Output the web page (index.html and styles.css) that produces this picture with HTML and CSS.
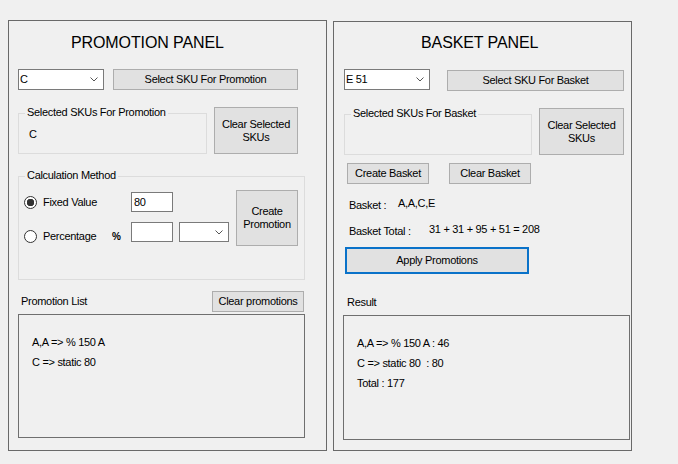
FILE: index.html
```html
<!DOCTYPE html>
<html>
<head>
<meta charset="utf-8">
<link rel="stylesheet" href="styles.css">
</head>
<body>
<div class="app">
  <section class="panel panel-promo">
    <h1 class="panel-title">PROMOTION PANEL</h1>
    <div class="row row-select">
      <div class="combo"><span>C</span><svg class="chev" width="8" height="5" viewBox="0 0 8 5"><path d="M0.5 0.5 L4 4 L7.5 0.5" fill="none" stroke="#555" stroke-width="1"/></svg></div>
      <button class="btn btn-select-promo">Select SKU For Promotion</button>
    </div>
    <div class="row row-selected">
      <div class="group group-selected-promo">
        <div class="group-title">Selected SKUs For Promotion</div>
        <div class="group-text">C</div>
      </div>
      <button class="btn btn-clear-sel btn-clear-promo">Clear Selected<br>SKUs</button>
    </div>
    <div class="group group-calc">
      <div class="group-title">Calculation Method</div>
      <div class="calc-body">
        <div class="calc-grid">
          <label class="radio-label"><span class="radio checked"></span>Fixed Value</label>
          <span></span>
          <div class="textbox">80</div>
          <span></span>
          <label class="radio-label radio-label-low"><span class="radio"></span>Percentage</label>
          <span class="pct">%</span>
          <div class="textbox"></div>
          <div class="combo combo-small"><span></span><svg class="chev" width="8" height="5" viewBox="0 0 8 5"><path d="M0.5 0.5 L4 4 L7.5 0.5" fill="none" stroke="#555" stroke-width="1"/></svg></div>
        </div>
        <button class="btn btn-create">Create<br>Promotion</button>
      </div>
    </div>
    <div class="row row-list-head">
      <span class="list-label">Promotion List</span>
      <button class="btn btn-clear-promos">Clear promotions</button>
    </div>
    <div class="listbox listbox-promo">
      <div>A,A =&gt; % 150 A</div>
      <div>C =&gt; static 80</div>
    </div>
  </section>

  <section class="panel panel-basket">
    <h1 class="panel-title">BASKET PANEL</h1>
    <div class="row row-select">
      <div class="combo"><span>E 51</span><svg class="chev" width="8" height="5" viewBox="0 0 8 5"><path d="M0.5 0.5 L4 4 L7.5 0.5" fill="none" stroke="#555" stroke-width="1"/></svg></div>
      <button class="btn btn-select-basket">Select SKU For Basket</button>
    </div>
    <div class="row row-selected">
      <div class="group group-selected-basket">
        <div class="group-title">Selected SKUs For Basket</div>
      </div>
      <button class="btn btn-clear-sel btn-clear-basket">Clear Selected<br>SKUs</button>
    </div>
    <div class="row row-basket-btns">
      <button class="btn btn-basket">Create Basket</button>
      <button class="btn btn-basket">Clear Basket</button>
    </div>
    <div class="info-row info-basket">
      <span class="info-label">Basket :</span>
      <span class="info-value">A,A,C,E</span>
    </div>
    <div class="info-row info-total">
      <span class="info-label">Basket Total :</span>
      <span class="info-value">31 + 31 + 95 + 51 = 208</span>
    </div>
    <button class="btn btn-apply">Apply Promotions</button>
    <span class="result-label">Result</span>
    <div class="listbox listbox-result">
      <div>A,A =&gt; % 150 A : 46</div>
      <div>C =&gt; static 80&nbsp; : 80</div>
      <div>Total : 177</div>
    </div>
  </section>
</div>
</body>
</html>
```

FILE: styles.css
```css
* { box-sizing: border-box; }

body {
  margin: 0;
  width: 678px;
  height: 464px;
  overflow: hidden;
  background: #f0f0f0;
  color: #000;
  font-family: "Liberation Sans", Arial, sans-serif;
  font-size: 11px;
  line-height: 13px;
  letter-spacing: -0.3px;
}

.app {
  display: flex;
  align-items: flex-start;
  gap: 6px;
  padding: 20px 0 0 8px;
}

.panel {
  border: 1px solid #696969;
  display: flex;
  flex-direction: column;
  align-items: flex-start;
}

.panel-promo { width: 319px; height: 431px; padding: 13px 0 0 9px; }
.panel-basket { width: 299px; height: 430px; margin-top: 1px; padding: 12px 0 0 10px; }

.panel-title {
  margin: 0;
  font-size: 16px;
  line-height: 18px;
  font-weight: normal;
  letter-spacing: -0.1px;
}
.panel-promo .panel-title { margin-left: 53px; }
.panel-basket .panel-title { margin-left: 77px; }

.row { display: flex; align-items: flex-start; }
.row-select { margin-top: 17px; }
.row-selected { margin-top: 17px; }

.combo {
  width: 86px;
  height: 21px;
  background: #fff;
  border: 1px solid #7a7a7a;
  display: flex;
  align-items: center;
  justify-content: space-between;
  padding: 0 5px 0 1px;
}
.combo-small { width: 50px; height: 20px; }
.chev { display: block; }

.btn {
  font: inherit;
  letter-spacing: inherit;
  color: #000;
  background: #e1e1e1;
  border: 1px solid #adadad;
  padding: 0;
  margin: 0;
  text-align: center;
  line-height: 13px;
}

.btn-select-promo { width: 185px; height: 21px; margin-left: 9px; }
.btn-select-basket { width: 177px; height: 21px; margin-left: 17px; margin-top: 1px; }

.group { border: 1px solid #dcdcdc; }
.group-title {
  width: fit-content;
  margin: -8px 0 0 6px;
  padding: 0 2px;
  background: #f0f0f0;
}
.group-text { margin: 9px 0 0 10px; }

.group-selected-promo { width: 189px; height: 41px; margin-top: 6px; }
.group-selected-basket { width: 188px; height: 41px; margin-top: 6px; }

.btn-clear-sel { height: 47px; margin-left: 7px; }
.btn-clear-promo { width: 84px; }
.btn-clear-basket { width: 85px; }

.group-calc { width: 287px; height: 104px; margin-top: 22px; }
.calc-body {
  display: flex;
  align-items: flex-start;
  margin-top: 8px;
  padding-left: 5px;
}
.calc-grid {
  display: grid;
  grid-template-columns: 82px 13px 42px 50px;
  grid-template-rows: 20px 20px;
  column-gap: 6px;
  row-gap: 10px;
  margin-top: 2px;
}
.radio-label { display: flex; align-items: center; gap: 6px; }
.radio-label-low { align-self: start; margin-top: 8px; }
.radio {
  width: 13px;
  height: 13px;
  border: 1px solid #333;
  border-radius: 50%;
  background: #fff;
  flex: none;
}
.radio.checked { background: radial-gradient(circle, #333 0 3.5px, #fff 4px); }
.pct {
  align-self: start;
  margin-top: 9px;
  font-weight: bold;
  font-size: 10px;
  line-height: 12px;
}
.textbox {
  background: #fff;
  border: 1px solid #7a7a7a;
  padding-left: 2px;
  line-height: 18px;
}
.btn-create { width: 62px; height: 56px; margin-left: 7px; }

.row-list-head {
  width: 287px;
  margin-top: 11px;
  justify-content: space-between;
  align-items: center;
}
.list-label { margin-left: 3px; }
.btn-clear-promos { width: 92px; height: 21px; margin-right: 1px; }

.listbox {
  width: 287px;
  border: 1px solid #6f6f6f;
  padding: 17px 0 0 13px;
  line-height: 20px;
}
.listbox-promo { height: 124px; margin-top: 2px; }
.listbox-result { height: 125px; margin-top: 6px; margin-left: -1px; }

.row-basket-btns { margin-top: 8px; margin-left: 3px; gap: 20px; }
.btn-basket { width: 82px; height: 21px; }

.info-row { display: flex; margin-left: 5px; }
.info-label { margin-top: 2px; }
.info-basket { margin-top: 13px; }
.info-basket .info-label { width: 49px; }
.info-total { margin-top: 11px; }
.info-total .info-label { width: 80px; }

.btn-apply {
  width: 184px;
  height: 27px;
  margin: 9px 0 0 1px;
  border: 2px solid #0a72c9;
}

.result-label { margin: 22px 0 0 3px; }
```
